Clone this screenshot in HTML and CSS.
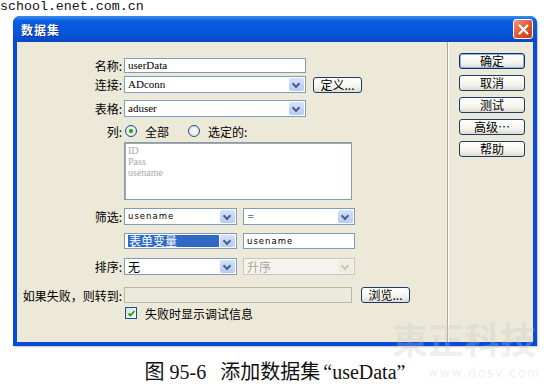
FILE: index.html
```html
<!DOCTYPE html>
<html lang="zh-CN">
	<head>
		<meta charset="UTF-8" />
		<title>数据集</title>
		<link rel="stylesheet" href="styles.css">
	</head>
	<body>
		<div class="url">school.enet.com.cn</div>
		<div class="window">
			<div class="titlebar">
				<span class="title">数据集</span>
				<span class="close">
					<svg width="13" height="13" viewBox="0 0 13 13"><path d="M2.5 2.5 L10.5 10.5 M10.5 2.5 L2.5 10.5" stroke="#fff" stroke-width="2.2" stroke-linecap="round"/></svg>
				</span>
			</div>
			<div class="client">
				<div class="form">
					<div class="row r-name">
						<span class="lbl">名称:</span>
						<div class="field w-long">userData</div>
					</div>
					<div class="row r-conn">
						<span class="lbl">连接:</span>
						<div class="combo w-long"><span class="val">ADconn</span><span class="arrow"></span></div>
						<a class="btn btn-def" href="javascript:;">定义...</a>
					</div>
					<div class="row r-table">
						<span class="lbl">表格:</span>
						<div class="combo w-long"><span class="val">aduser</span><span class="arrow"></span></div>
					</div>
					<div class="row r-cols">
						<span class="lbl">列:</span>
						<span class="radio on"></span><span class="opt">全部</span>
						<span class="radio"></span><span class="opt">选定的:</span>
					</div>
					<div class="row r-list">
						<span class="lbl"></span>
						<div class="listbox">
							<div>ID</div>
							<div>Pass</div>
							<div>usename</div>
						</div>
					</div>
					<div class="row r-filter">
						<span class="lbl">筛选:</span>
						<div class="combo w-short"><span class="val sans">usename</span><span class="arrow"></span></div>
						<div class="combo w-short2"><span class="val sans">=</span><span class="arrow"></span></div>
					</div>
					<div class="row r-filter2">
						<span class="lbl"></span>
						<div class="combo w-short"><span class="val sel">表单变量</span><span class="arrow"></span></div>
						<div class="field w-short2 sans">usename</div>
					</div>
					<div class="row r-sort">
						<span class="lbl">排序:</span>
						<div class="combo w-short"><span class="val cjk">无</span><span class="arrow"></span></div>
						<div class="combo w-short2 disabled"><span class="val cjk">升序</span><span class="arrow"></span></div>
					</div>
					<div class="row r-fail">
						<span class="lbl">如果失败，则转到:</span>
						<div class="field w-list disabled"></div>
						<a class="btn btn-browse" href="javascript:;">浏览...</a>
					</div>
					<div class="row r-debug">
						<span class="lbl"></span>
						<span class="check">
							<svg width="9" height="9" viewBox="0 0 9 9"><path d="M1.5 4.5 L3.5 6.5 L7.5 2" fill="none" stroke="#21a121" stroke-width="1.8"/></svg>
						</span>
						<span class="opt">失败时显示调试信息</span>
					</div>
				</div>
				<div class="side">
					<a class="btn btn-side default" href="javascript:;">确定</a>
					<a class="btn btn-side" href="javascript:;">取消</a>
					<a class="btn btn-side" href="javascript:;">测试</a>
					<a class="btn btn-side" href="javascript:;">高级…</a>
					<a class="btn btn-side" href="javascript:;">帮助</a>
				</div>
			</div>
		</div>
		<div class="caption">图 95-6<span class="sp"></span>添加数据集 <span class="q">“useData”</span></div>
		<div class="watermark">
			<div class="wm-main">東正科技</div>
			<div class="wm-sub">www.dosv.com</div>
		</div>
	</body>
</html>
```

FILE: styles.css
```css
* {
	margin: 0;
	padding: 0;
	box-sizing: border-box;
}
body {
	background: #fff;
	font-family: "Noto Sans CJK SC", sans-serif;
	font-size: 12px;
	color: #000;
	width: 552px;
	height: 386px;
	overflow: hidden;
	position: relative;
}
a {
	text-decoration: none;
	color: #000;
}

.url {
	height: 16px;
	font-family: "Liberation Mono", monospace;
	font-size: 13.3px;
	line-height: 14px;
	color: #111;
}

.window {
	margin-left: 13px;
	width: 524px;
	background: #0a4bd6;
	border-radius: 7px 7px 0 0;
	padding: 0 4px 4px 4px;
	box-shadow: 1px 1px 2px rgba(0, 0, 0, 0.25);
}

.titlebar {
	height: 26px;
	margin: 0 -4px;
	padding: 0 4px 0 8px;
	border-radius: 7px 7px 0 0;
	background: linear-gradient(#3a8cf3, #0a5ee0 20%, #0653d8 70%, #0847c4);
	display: flex;
	align-items: center;
	justify-content: space-between;
}
.title {
	color: #fff;
	font-weight: bold;
	font-size: 12px;
	letter-spacing: 1px;
	text-shadow: 1px 1px 0 #0a2d84;
}
.close {
	width: 20px;
	height: 20px;
	border: 1px solid #fff;
	border-radius: 3px;
	background: linear-gradient(135deg, #f29a80, #e0542f 55%, #c8391a);
	display: flex;
	align-items: center;
	justify-content: center;
}

.client {
	background: #ece9d8;
	display: flex;
	height: 300px;
}

.form {
	width: 430px;
	padding-top: 16px;
	display: flex;
	flex-direction: column;
}
.row {
	display: flex;
	align-items: center;
}
.lbl {
	width: 105px;
	margin-right: 2px;
	text-align: right;
	white-space: nowrap;
	flex-shrink: 0;
}
.r-name { height: 15px; }
.r-conn { height: 17px; margin-top: 3px; }
.r-table { height: 17px; margin-top: 7px; }
.r-cols { height: 14px; margin-top: 7px; }
.r-list { height: 58px; margin-top: 4px; align-items: stretch; }
.r-filter { height: 17px; margin-top: 8px; }
.r-filter2 { height: 16px; margin-top: 8px; }
.r-sort { height: 17px; margin-top: 9px; }
.r-fail { height: 16px; margin-top: 12px; }
.r-debug { height: 14px; margin-top: 3px; }

.w-long { width: 182px; }
.w-short { width: 113px; }
.w-short2 { width: 112px; margin-left: 6px; }
.w-list { width: 228px; }

.field,
.combo {
	height: 100%;
	border: 1px solid #7f9db9;
	background: #fff;
	font-family: "Liberation Serif", serif;
	font-size: 11px;
	line-height: 13px;
	padding-left: 3px;
	display: flex;
	align-items: center;
}
.field.disabled {
	background: #ebeadb;
	border-color: #b9b8a8;
}
.combo {
	justify-content: space-between;
	padding: 1px;
	padding-left: 3px;
}
.combo .val {
	flex: 1;
	white-space: nowrap;
}
.sans {
	font-family: "DejaVu Sans", sans-serif;
	font-size: 8.5px;
	letter-spacing: 1px;
}
.cjk {
	font-family: "Noto Sans CJK SC", sans-serif;
	font-size: 12px;
}
.combo .sel {
	flex: none;
	width: 91px;
	height: 12px;
	background: #316ac5;
	color: #fff;
	font-family: "Noto Sans CJK SC", sans-serif;
	font-size: 12px;
	line-height: 12px;
	padding-left: 1px;
}
.arrow {
	width: 15px;
	height: 100%;
	border-radius: 2px;
	background: linear-gradient(#d4e1fb, #b5cbf4) center / 100% 100% no-repeat;
	position: relative;
	flex-shrink: 0;
}
.arrow::after {
	content: "";
	position: absolute;
	left: 4px;
	top: 3px;
	width: 4px;
	height: 4px;
	border-right: 2px solid #4d6185;
	border-bottom: 2px solid #4d6185;
	transform: rotate(45deg);
}
.combo.disabled {
	border-color: #c9c7ba;
	background: #f4f3ee;
	color: #aca899;
}
.combo.disabled .arrow {
	background: #eeede5;
}
.combo.disabled .arrow::after {
	border-color: #c9c7ba;
}

.btn {
	display: flex;
	align-items: center;
	justify-content: center;
	border: 1px solid #1e3d66;
	border-radius: 3px;
	background: linear-gradient(#ffffff, #f5f4ef 60%, #dedcd2);
	font-size: 12px;
	line-height: 12px;
	white-space: nowrap;
}
.btn-def {
	width: 49px;
	height: 16px;
	margin-left: 7px;
}
.btn-browse {
	width: 49px;
	height: 16px;
	margin-left: 9px;
}

.radio {
	width: 12px;
	height: 12px;
	border-radius: 50%;
	border: 1px solid #1c5180;
	background: radial-gradient(circle, #fff, #dcdbd3);
	margin-left: 1px;
	display: flex;
	align-items: center;
	justify-content: center;
}
.radio.on::after {
	content: "";
	width: 4px;
	height: 4px;
	border-radius: 50%;
	background: #21a121;
	box-shadow: 0 0 1px #6fd06f;
}
.opt {
	margin-left: 8px;
	margin-right: 18px;
}
.check {
	width: 12px;
	height: 12px;
	border: 1px solid #1c5180;
	background: linear-gradient(135deg, #dcdbd3, #fff);
	margin-left: 1px;
	display: flex;
	align-items: center;
	justify-content: center;
}

.listbox {
	width: 228px;
	border: 1px solid #7f9db9;
	box-shadow: inset 1px 1px 0 #aca899;
	background: #fff;
	padding: 2px 3px;
	font-family: "Liberation Serif", serif;
	font-size: 10px;
	line-height: 11px;
	color: #a8a8a8;
}

.side {
	flex: 1;
	border-left: 1px solid #aca899;
	box-shadow: inset 1px 0 0 #fff;
	padding: 11px 0 0 11px;
	display: flex;
	flex-direction: column;
	gap: 6px;
}
.btn-side {
	width: 66px;
	height: 16px;
}
.btn-side.default {
	border-color: #0f2f6e;
	box-shadow: inset 0 0 0 1px #8db2e3;
}

.caption {
	margin-top: 14px;
	text-align: center;
	padding-right: 2px;
	font-family: "Liberation Serif", "Noto Sans CJK SC", serif;
	font-size: 20px;
	line-height: 24px;
	color: #111;
}
.caption .sp {
	display: inline-block;
	width: 14px;
}
.caption .q {
	margin-left: -2px;
}

.watermark {
	position: absolute;
	left: 392px;
	top: 320px;
	width: 152px;
	color: rgba(200, 200, 200, 0.3);
	white-space: nowrap;
	pointer-events: none;
}
.wm-main {
	font-family: "Noto Sans CJK TC", sans-serif;
	font-size: 36px;
	font-weight: bold;
	line-height: 36px;
}
.wm-sub {
	font-family: "DejaVu Sans", sans-serif;
	font-size: 12px;
	line-height: 14px;
	letter-spacing: 2px;
	margin-top: 10px;
	padding-left: 36px;
}
```
